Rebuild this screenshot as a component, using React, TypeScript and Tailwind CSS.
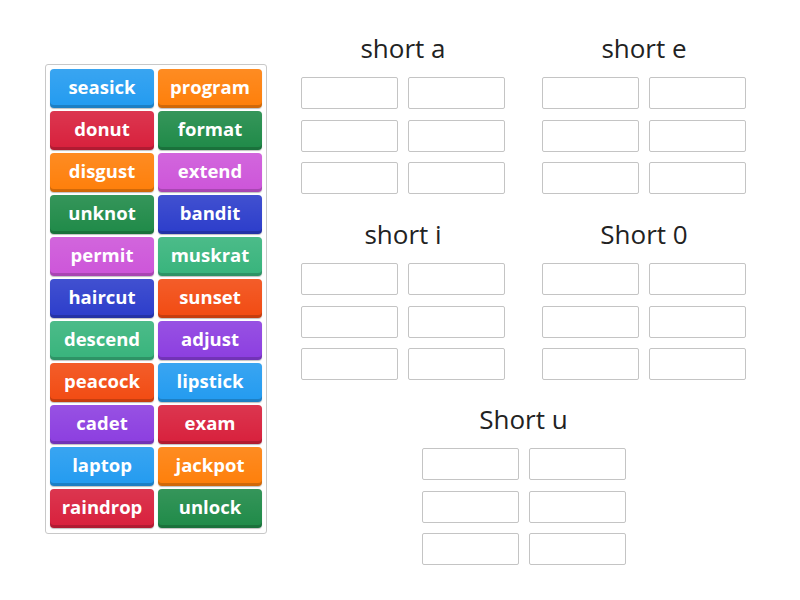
const COLORS: Record<string, string> = {
  blue: 'bg-[#239bf0]',
  orange: 'bg-[#fe7f0a]',
  red: 'bg-[#d8203c]',
  green: 'bg-[#1f8a48]',
  magenta: 'bg-[#cd55d9]',
  navy: 'bg-[#2c3dcb]',
  mint: 'bg-[#38b47c]',
  flame: 'bg-[#f24b12]',
  purple: 'bg-[#8c3ee0]'
};

const TILES: [string, string][] = [
  ['seasick', 'blue'],
  ['program', 'orange'],
  ['donut', 'red'],
  ['format', 'green'],
  ['disgust', 'orange'],
  ['extend', 'magenta'],
  ['unknot', 'green'],
  ['bandit', 'navy'],
  ['permit', 'magenta'],
  ['muskrat', 'mint'],
  ['haircut', 'navy'],
  ['sunset', 'flame'],
  ['descend', 'mint'],
  ['adjust', 'purple'],
  ['peacock', 'flame'],
  ['lipstick', 'blue'],
  ['cadet', 'purple'],
  ['exam', 'red'],
  ['laptop', 'blue'],
  ['jackpot', 'orange'],
  ['raindrop', 'red'],
  ['unlock', 'green']
];

function Tile({ word, color }: { word: string; color: string }) {
  return (
    <div
      className={`${COLORS[color]} flex h-[39px] items-center justify-center rounded-[4px] bg-linear-to-b from-white/10 to-transparent text-[18.5px] font-bold text-white shadow-[inset_0_-3px_0_rgba(0,0,0,0.18),0_1px_1px_rgba(0,0,0,0.25)]`}
    >
      <span className="pb-[3px]">{word}</span>
    </div>
  );
}

function Group({ title, className = '' }: { title: string; className?: string }) {
  return (
    <div className={`flex w-[204px] flex-col items-center ${className}`}>
      <div className="h-[34px] text-[26px] leading-[34px] text-[#222]">{title}</div>
      <div className="mt-[12px] grid w-full grid-cols-2 gap-x-[10px] gap-y-[10.5px]">
        {Array.from({ length: 6 }).map((_, i) => (
          <div key={i} className="h-[32px] rounded-[2px] border border-[#c4c4c4] bg-white" />
        ))}
      </div>
    </div>
  );
}

export default function App() {
  return (
    <div
      className="flex h-[600px] w-[800px] items-start bg-white pl-[45px] pt-[31px]"
      style={{ fontFamily: '"Open Sans", "Noto Sans", sans-serif' }}
    >
      <div className="mt-[33px] grid w-[222px] grid-cols-2 gap-x-[4px] gap-y-[3px] rounded-[3px] border border-[#c8c8c8] px-[4px] pb-[5px] pt-[4px]">
        {TILES.map(([word, color]) => (
          <Tile key={word} word={word} color={color} />
        ))}
      </div>

      <div className="ml-[34px] flex flex-col items-center">
        <div className="flex gap-[37px]">
          <Group title="short a" />
          <Group title="short e" />
        </div>
        <div className="mt-[23px] flex gap-[37px]">
          <Group title="short i" />
          <Group title="Short 0" />
        </div>
        <Group title="Short u" className="mt-[22px]" />
      </div>
    </div>
  );
}
